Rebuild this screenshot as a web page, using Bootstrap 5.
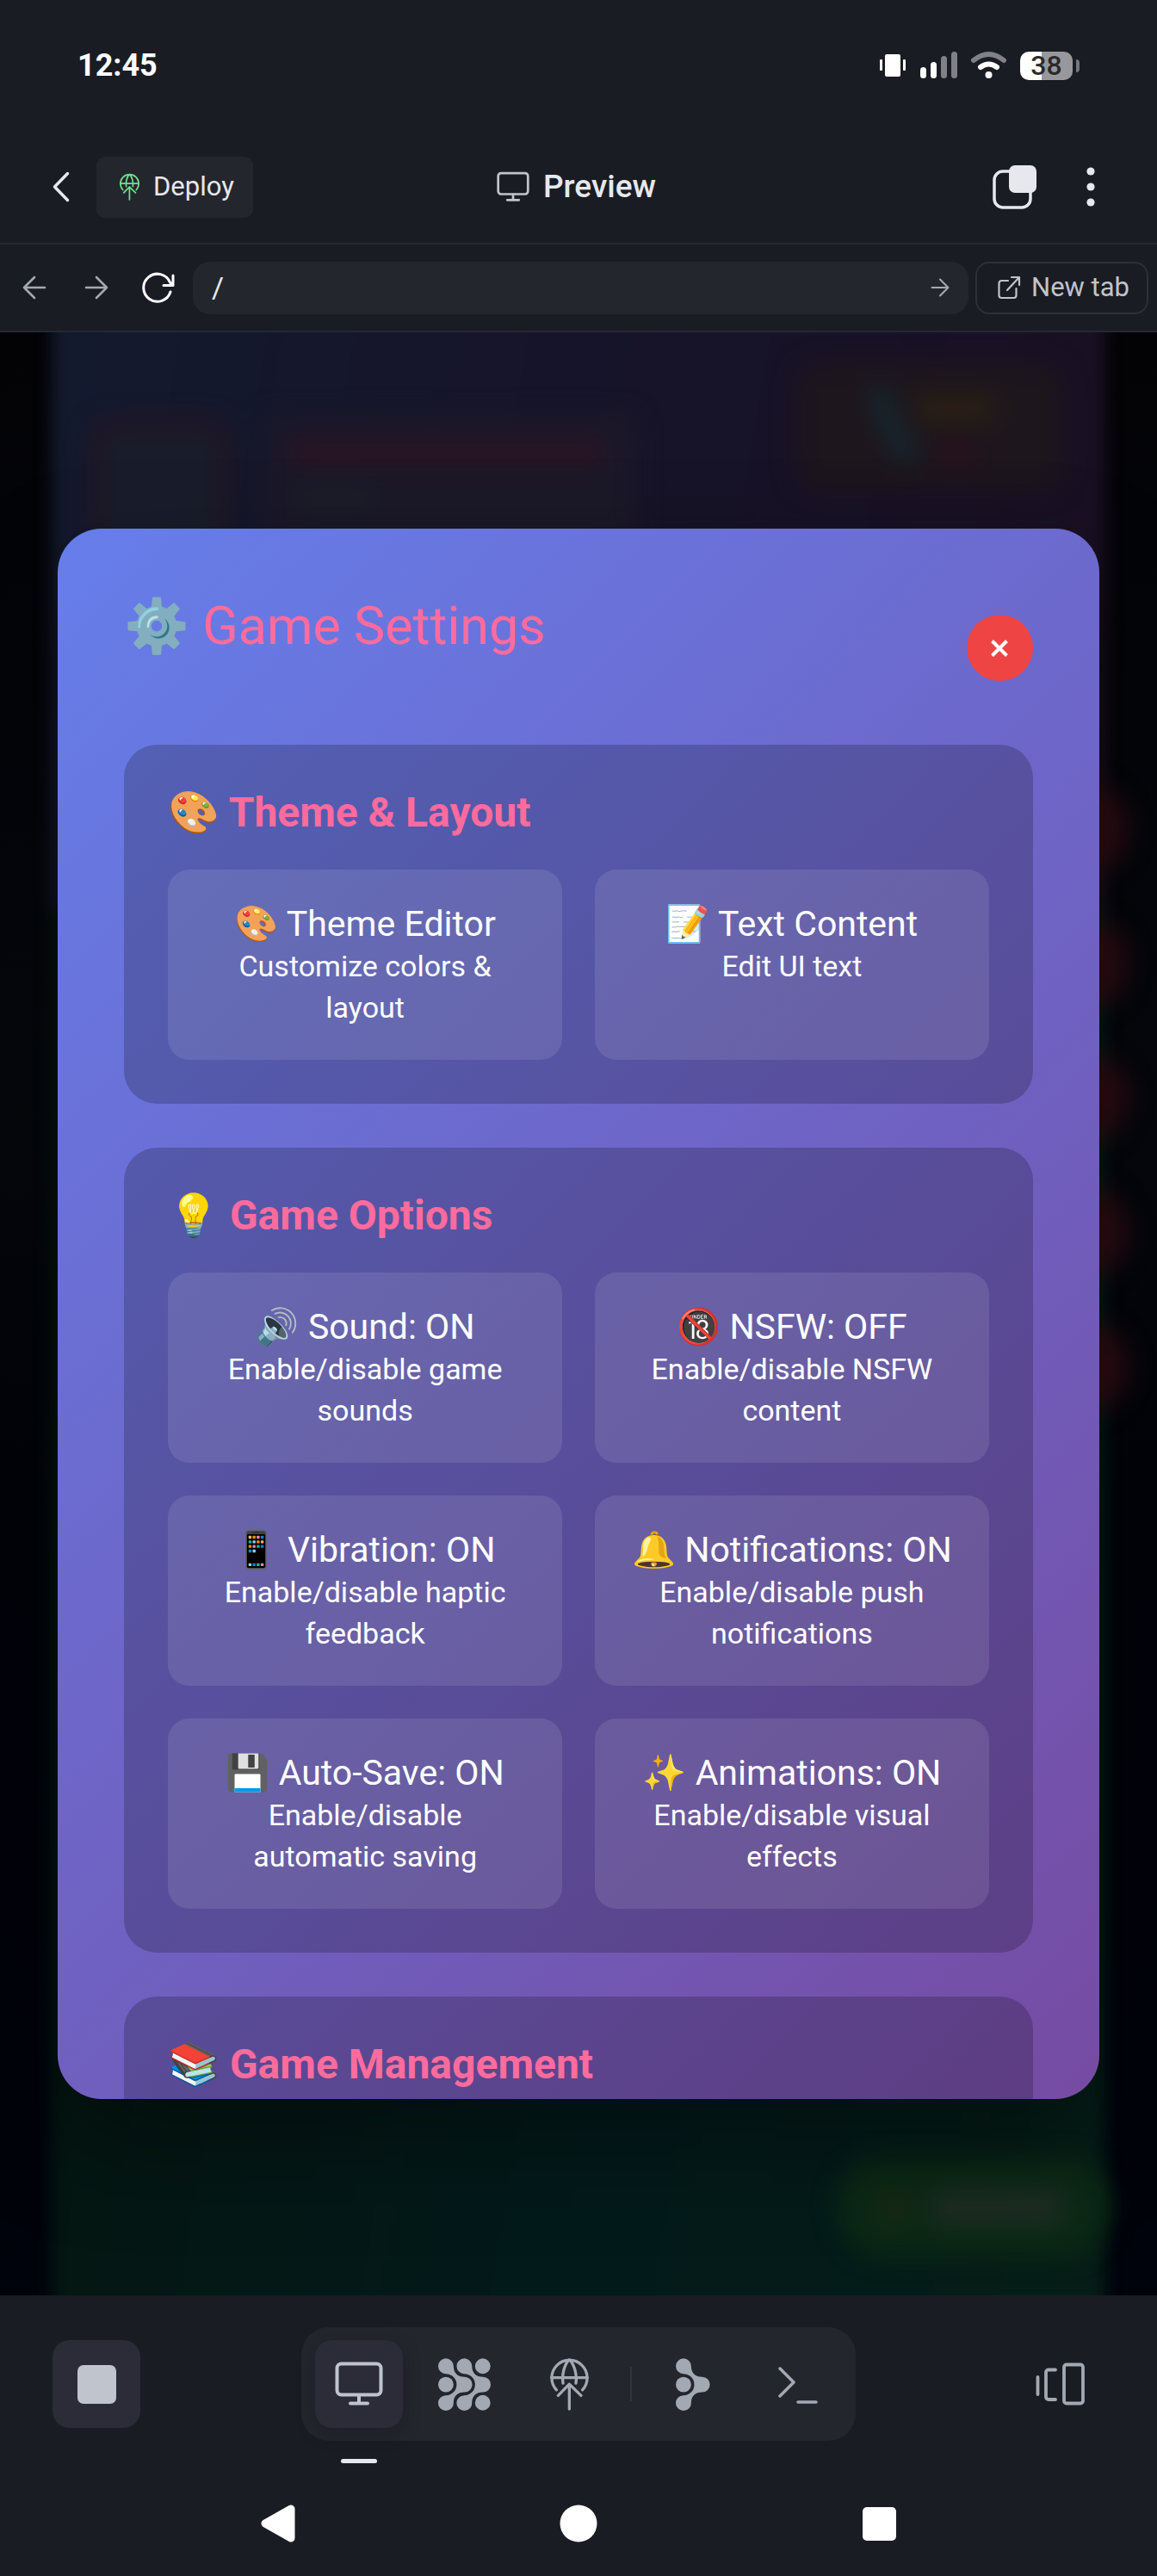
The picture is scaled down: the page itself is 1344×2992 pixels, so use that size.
<!DOCTYPE html>
<html lang="en">
<head>
<meta charset="utf-8">
<meta name="viewport" content="width=device-width, initial-scale=1">
<title>Preview</title>
<link rel="stylesheet" href="https://cdn.jsdelivr.net/npm/bootstrap@5.3.0/dist/css/bootstrap.min.css">
<style>
  :root { --shell: #1a1c24; --raised: #24262e; --tile: #2b2c37; --line: #262832; --text: #e6e8ed; --muted: #a3a9b3; --soft: #c0c4cd; --pink: #ff6b9d; }
  body { background: var(--shell); color: var(--text); font-family: Roboto, "Noto Color Emoji", sans-serif; font-size: 31px; line-height: 1.2; }
  .app { height: 100vh; overflow: hidden; }
  button { background: none; border: 0; padding: 0; color: inherit; display: flex; align-items: center; justify-content: center; }
  svg { display: block; flex: none; }
  .ln { fill: none; stroke: currentColor; stroke-linecap: round; stroke-linejoin: round; }

  .statusbar { height: 152px; padding: 0 90px; flex: none; }
  .clock { font: 700 36px/44px Roboto, sans-serif; color: #fff; }
  .battery { font: 500 32px/33px Roboto, sans-serif; width: 61px; height: 33px; border-radius: 10px; color: #2a2a2c; text-align: center; background: linear-gradient(90deg, #fff 41%, #98989c 41%); }
  .battery-tip { width: 4px; height: 15px; border-radius: 0 4px 4px 0; background: #77787d; }

  .topbar { height: 132px; padding: 0 45px 0 40px; border-bottom: 2px solid var(--line); display: grid; grid-template-columns: 1fr auto 1fr; align-items: center; flex: none; }
  .back { width: 62px; height: 70px; margin-right: 10px; }
  .deploy { height: 71px; padding: 0 22px 0 26px; gap: 15px; border-radius: 10px; background: var(--raised); }
  .page-name { font-size: 37px; font-weight: 500; line-height: 44px; margin: 0; }
  .topicon { width: 64px; height: 70px; }

  .urlbar { height: 102px; padding: 0 10px 0 8px; border-bottom: 2px solid var(--line); flex: none; }
  .navbtn { width: 64px; height: 61px; color: var(--muted); }
  .navbtn-live { color: #fff; }
  .address { height: 61px; border-radius: 20px; background: var(--raised); padding: 0 22px; }
  .address input, .address input:focus { background: none; border: 0; padding: 0; color: var(--text); font-size: 34px; line-height: 44px; box-shadow: none; }
  .newtab { height: 61px; padding: 0 20px 0 24px; gap: 12px; border: 2px solid #2d2f3b; border-radius: 16px; color: var(--soft); text-decoration: none; white-space: nowrap; }

  .stage { background: linear-gradient(#030306, #05070c 40%, #020309 60%, #01030c); isolation: isolate; }
  .behind { position: absolute; inset: 0; overflow: hidden; z-index: -1; }
  .blob { position: absolute; }
  .game { inset: -30px 60px; filter: blur(9px); background: linear-gradient(100deg, #131a2e, #16142a 45%, #1a0f22) top / 100% 30% no-repeat, linear-gradient(100deg, #04150f, #031a1b 60%, #051d16) bottom / 100% 70% no-repeat; }
  .soft-edge { filter: blur(14px); }
  .hearts { right: 34px; top: 522px; gap: 46px; }
  .hearts span { width: 110px; height: 110px; border-radius: 50%; background: #2b0c13; }
  .upgrade { right: 54px; bottom: 46px; width: 318px; height: 114px; border-radius: 57px; background: #0b2915; }

  .settings { width: 90%; height: 80%; border-radius: 51px; padding: 77px 77px 0; overflow: hidden; background: linear-gradient(135deg, #667eea 0%, #764ba2 100%); box-shadow: 0 50px 120px rgba(0,0,0,.4); color: #fff; }
  .settings-head { height: 123px; margin-bottom: 51px; }
  .settings-title { font-size: 61px; font-weight: 400; line-height: 72px; margin: 0 0 51px; color: var(--pink); }
  .closer { width: 77px; height: 77px; border-radius: 50%; background: #ef4444; color: #fff; }
  .group { background: rgba(0,0,0,.2); border-radius: 38px; padding: 51px; margin-bottom: 51px; }
  .group-title { font-size: 48px; font-weight: 700; line-height: 56px; margin: 0 0 38px; color: var(--pink); white-space: nowrap; }
  .options { display: grid; grid-template-columns: 1fr 1fr; gap: 38px; }
  .option { flex-direction: column; justify-content: flex-start; text-align: center; background: rgba(255,255,255,.1); border-radius: 25px; padding: 38px 38px 37px; font-size: 34px; line-height: 48px; }
  .option-name { font-size: 41px; line-height: 50px; margin: 0 -20px; white-space: nowrap; }

  .dock { height: 188px; padding: 37px 61px 0; display: grid; grid-template-columns: 1fr auto 1fr; align-items: start; flex: none; }
  .dock-side { height: 132px; }
  .tile { width: 102px; height: 102px; border-radius: 20px; color: var(--muted); position: relative; }
  .tile-on { background: var(--tile); color: var(--soft); }
  .tools { height: 132px; padding: 0 16px; gap: 20px; border-radius: 32px; background: var(--raised); }
  .tools .tile-on { box-shadow: 0 6px 20px rgba(20,20,30,.4); }
  .tools .tile-on::after { content: ""; position: absolute; left: 30px; right: 30px; bottom: -41px; height: 5px; border-radius: 3px; background: var(--text); }
  .divider { width: 2px; height: 40px; background: #32343f; }
  .sysnav { height: 138px; width: 78%; padding-top: 16px; color: #fff; flex: none; display: grid; grid-template-columns: repeat(3, 1fr); place-items: center; }
</style>
<script src="https://cdn.jsdelivr.net/npm/bootstrap@5.3.0/dist/js/bootstrap.bundle.min.js"></script>
</head>
<body>
<svg width="0" height="0" class="position-absolute" aria-hidden="true">
  <symbol id="globe-up" viewBox="891 142 141 187">
    <g class="ln" stroke-width="10"><path d="M916 256A62 62 0 1 1 1007 256M898 213H1025M939 233C934 202 944 166 961 150C978 166 989 202 984 233M961 323V236M922 276L961 236L1002 276"/></g>
  </symbol>
  <symbol id="monitor" viewBox="0 0 56 52">
    <g class="ln" stroke-width="4"><rect x="2.500" y="2.500" width="51" height="36" rx="5"/><path d="M28 39V48M18 48.500H38"/></g>
  </symbol>
  <symbol id="arrow" viewBox="0 0 28 28"><path class="ln" stroke-width="2.600" d="M2 14H26M14 2L26 14L14 26"/></symbol>
</svg>

<div class="app d-flex flex-column">
  <div class="statusbar d-flex align-items-center justify-content-between">
    <span class="clock">12:45</span>
    <div class="d-flex align-items-center">
      <svg width="148" height="34" viewBox="1022 60 148 34" class="me-3" aria-label="Vibrate, signal, Wi-Fi">
        <g fill="#fff"><rect x="1029" y="64" width="18" height="26" rx="2"/><rect x="1023" y="70" width="3" height="13" rx="1"/><rect x="1050" y="70" width="3" height="13" rx="1"/>
        <rect x="1070" y="79" width="7" height="13" rx="3.500"/><rect x="1082" y="73" width="7" height="19" rx="3.500"/></g>
        <g fill="#808186"><rect x="1094" y="66" width="7" height="26" rx="3.500"/><rect x="1106" y="61" width="7" height="31" rx="3.500"/></g>
        <path d="M1132 71Q1149.500 57 1167 71" fill="none" stroke="#808186" stroke-width="6" stroke-linecap="round"/>
        <path d="M1140 79Q1149.500 72 1159 79" fill="none" stroke="#fff" stroke-width="6" stroke-linecap="round"/><circle cx="1149.500" cy="88" r="4" fill="#fff"/>
      </svg>
      <span class="battery">38</span><span class="battery-tip ms-1"></span>
    </div>
  </div>

  <header class="topbar">
    <div class="d-flex align-items-center">
      <button class="back" type="button" aria-label="Back"><svg width="20" height="36" viewBox="0 0 20 36"><path class="ln" stroke-width="3.500" d="M17.500 2.500L2.500 18L17.500 33.500"/></svg></button>
      <button class="deploy" type="button"><svg width="25" height="32" color="#6fe08a"><use href="#globe-up"/></svg>Deploy</button>
    </div>
    <div class="d-flex align-items-center gap-3">
      <svg width="38" height="36" color="#c0c4cd"><use href="#monitor"/></svg>
      <h1 class="page-name">Preview</h1>
    </div>
    <div class="d-flex justify-content-end align-items-center gap-4">
      <button class="topicon" type="button" aria-label="Tabs"><svg width="52" height="52" viewBox="0 0 52 52"><rect x="2" y="8" width="42" height="42" rx="10" fill="none" stroke="currentColor" stroke-width="3.500"/><rect x="19" y="1" width="32" height="32" rx="7" fill="currentColor"/></svg></button>
      <button class="topicon" type="button" aria-label="More"><svg width="10" height="46" viewBox="0 0 10 46" fill="currentColor"><circle cx="5" cy="5" r="4.600"/><circle cx="5" cy="23" r="4.600"/><circle cx="5" cy="41" r="4.600"/></svg></button>
    </div>
  </header>

  <nav class="urlbar d-flex align-items-center gap-2">
    <button class="navbtn" type="button" aria-label="Go back"><svg width="28" height="28" viewBox="0 0 28 28"><path class="ln" stroke-width="2.600" d="M26 14H2M14 2L2 14L14 26"/></svg></button>
    <button class="navbtn" type="button" aria-label="Go forward"><svg width="28" height="28"><use href="#arrow"/></svg></button>
    <button class="navbtn navbtn-live" type="button" aria-label="Reload"><svg width="38" height="36" viewBox="0 0 38 36"><path class="ln" stroke-width="3" d="M33 23A16 16 0 1 1 32.500 12L35.500 15.500M36 4V15.500H25"/></svg></button>
    <div class="address flex-grow-1 d-flex align-items-center">
      <input class="form-control" type="text" value="/" aria-label="Address">
      <button type="button" aria-label="Open address"><svg width="22" height="22" color="#a3a9b3"><use href="#arrow"/></svg></button>
    </div>
    <a class="newtab d-flex align-items-center" href="#"><svg width="27" height="28" viewBox="0 0 27 28"><path class="ln" stroke-width="2.200" d="M12 6H4.500A3 3 0 0 0 1.500 9V23A3 3 0 0 0 4.500 26H18.500A3 3 0 0 0 21.500 23V15M16 2H25V11M25 2L11 17"/></svg>New tab</a>
  </nav>

  <main class="stage flex-grow-1 position-relative d-flex align-items-center justify-content-center">
    <div class="behind" aria-hidden="true">
      <div class="blob game"></div>
      <svg class="blob soft-edge" width="100%" height="240" viewBox="0 0 1344 240">
        <rect x="112" y="108" width="148" height="150" rx="20" fill="#191d2b" stroke="#26131f" stroke-width="12"/>
        <rect x="305" y="95" width="435" height="160" rx="20" fill="#1b1828"/>
        <rect x="340" y="126" width="360" height="26" fill="#2c1323"/>
        <rect x="345" y="180" width="90" height="24" fill="#1b1f28"/>
        <rect x="925" y="35" width="310" height="150" rx="28" fill="#1d161c"/>
        <path d="M1022 75L1030 100L1052 140" stroke="#16262f" stroke-width="26" stroke-linecap="round" fill="none"/>
        <rect x="1065" y="76" width="88" height="26" fill="#2c2113"/><rect x="1090" y="126" width="44" height="26" fill="#2a101c"/>
      </svg>
      <div class="blob soft-edge hearts d-flex flex-column"><span></span><span></span><span></span><span></span><span></span></div>
      <div class="blob soft-edge upgrade d-flex align-items-center"><svg width="318" height="60" viewBox="0 0 318 60"><rect x="54" y="14" width="30" height="34" fill="#1d2912"/><rect x="112" y="10" width="150" height="42" fill="#1e2c23"/></svg></div>
    </div>

    <section class="settings">
      <div class="settings-head d-flex justify-content-between align-items-center">
        <h2 class="settings-title">⚙️ Game Settings</h2>
        <button class="closer" type="button" aria-label="Close"><svg width="22" height="22" viewBox="0 0 22 22"><path d="M2.500 2.500L19.500 19.500M19.500 2.500L2.500 19.500" stroke="currentColor" stroke-width="4"/></svg></button>
      </div>

      <div class="group">
        <h3 class="group-title">🎨 Theme &amp; Layout</h3>
        <div class="options">
          <button class="option" type="button"><span class="option-name">🎨 Theme Editor</span>Customize colors &amp; layout</button>
          <button class="option" type="button"><span class="option-name">📝 Text Content</span>Edit UI text</button>
        </div>
      </div>

      <div class="group">
        <h3 class="group-title">💡 Game Options</h3>
        <div class="options">
          <button class="option" type="button"><span class="option-name">🔊 Sound: ON</span>Enable/disable game sounds</button>
          <button class="option" type="button"><span class="option-name">🔞 NSFW: OFF</span>Enable/disable NSFW content</button>
          <button class="option" type="button"><span class="option-name">📱 Vibration: ON</span>Enable/disable haptic feedback</button>
          <button class="option" type="button"><span class="option-name">🔔 Notifications: ON</span>Enable/disable push notifications</button>
          <button class="option" type="button"><span class="option-name">💾 Auto-Save: ON</span>Enable/disable automatic saving</button>
          <button class="option" type="button"><span class="option-name">✨ Animations: ON</span>Enable/disable visual effects</button>
        </div>
      </div>

      <div class="group">
        <h3 class="group-title">📚 Game Management</h3>
      </div>
    </section>
  </main>

  <footer class="dock">
    <div class="dock-side d-flex align-items-center"><button class="tile tile-on" type="button" aria-label="Stop"><svg width="45" height="45"><rect width="45" height="45" rx="7" fill="currentColor"/></svg></button></div>
    <div class="tools d-flex align-items-center">
      <button class="tile tile-on" type="button" aria-label="Preview"><svg width="56" height="52"><use href="#monitor"/></svg></button>
      <button class="tile" type="button" aria-label="Agent"><svg width="61" height="61" viewBox="503 143 185 185" fill="currentColor"><g id="chev"><path d="M557 171C557 195 572 209 596 209A27 27 0 0 1 596 263C572 263 557 277 557 300A27 27 0 1 1 530 274A38 38 0 0 0 530 198A27 27 0 1 1 557 171Z"/></g><use href="#chev" x="65"/><circle cx="530" cy="236" r="27"/><circle cx="660" cy="171" r="27"/><circle cx="660" cy="300" r="27"/></svg></button>
      <button class="tile" type="button" aria-label="Deployments"><svg width="47" height="62"><use href="#globe-up"/></svg></button>
      <span class="divider"></span>
      <button class="tile" type="button" aria-label="Workflows"><svg width="40" height="61" viewBox="503 143 121 185" fill="currentColor"><use href="#chev"/><circle cx="530" cy="236" r="27"/></svg></button>
      <button class="tile" type="button" aria-label="Shell"><svg width="46" height="52" viewBox="0 0 46 52"><path class="ln" stroke-width="3.500" d="M2 8L18 24L2 40M23 47H44"/></svg></button>
    </div>
    <div class="dock-side d-flex align-items-center justify-content-end"><button class="tile" type="button" aria-label="Switch panes"><svg width="58" height="50" viewBox="0 0 58 50"><g class="ln" stroke-width="3.800"><rect x="33" y="2.500" width="22" height="45" rx="3"/><path d="M23 8.500H15A3 3 0 0 0 12 11.500V40A3 3 0 0 0 15 43H23M2.500 17V37"/></g></svg></button></div>
  </footer>

  <div class="sysnav mx-auto">
    <button type="button" aria-label="System back"><svg width="40" height="44" viewBox="0 0 40 44"><path d="M35 5V39L5 22Z" fill="currentColor" stroke="currentColor" stroke-width="9" stroke-linejoin="round"/></svg></button>
    <button type="button" aria-label="Home"><svg width="44" height="44"><circle cx="22" cy="22" r="21.500" fill="currentColor"/></svg></button>
    <button type="button" aria-label="Recents"><svg width="39" height="39"><rect width="39" height="39" rx="5" fill="currentColor"/></svg></button>
  </div>
</div>
</body>
</html>
